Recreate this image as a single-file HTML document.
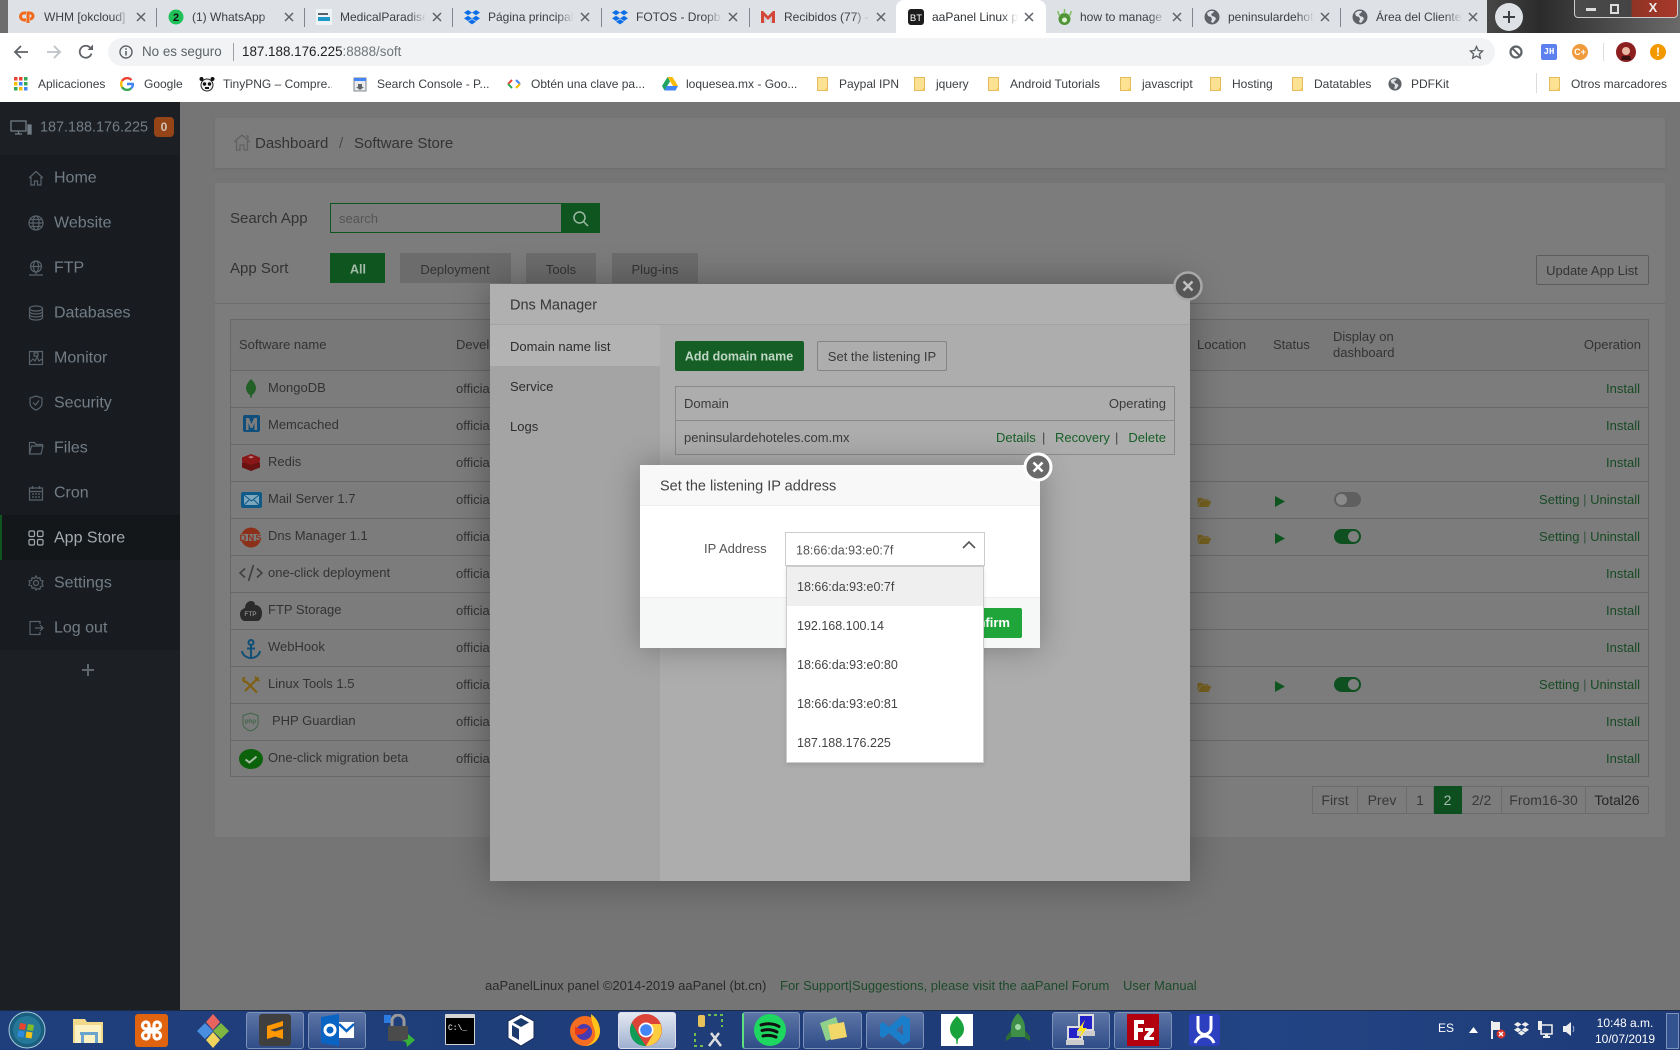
<!DOCTYPE html>
<html lang="en"><head><meta charset="utf-8"><title>aaPanel Linux panel</title>
<style>
html,body{margin:0;padding:0}
body{width:1680px;height:1050px;position:relative;overflow:hidden;background:#757575;font-family:"Liberation Sans",sans-serif;font-size:13px;color:#333}
div,svg,span.a{box-sizing:border-box}
.b,.t,svg.i{position:absolute}
.t{white-space:nowrap;transform:translateY(-50%);line-height:1.2}
.r{transform:translate(-100%,-50%)}
.c{transform:translate(-50%,-50%)}
.tab{font-size:12px;color:#3c4043;width:86px;overflow:hidden;-webkit-mask-image:linear-gradient(90deg,#000 80%,transparent)}
.sep{position:absolute;top:8px;width:1px;height:19px;background:#80868b}
.x{position:absolute;top:12px;width:10px;height:10px}
.bm{font-size:12px;color:#3c4043;top:84px}
.m{font-size:16px;color:#727d86}
.mi{position:absolute;left:28px;width:16px;height:16px;fill:none;stroke:#58626b;stroke-width:1.2}
.n{font-size:13px;color:#333;left:268px}
.o{font-size:13px;color:#333;left:456px}
.g{font-size:13px;color:#174a24}
.ln{position:absolute;left:230px;width:1419px;height:1px;background:#686868}
.tog{position:absolute;left:1334px;width:27px;height:15px;border-radius:8px;background:#0e5020}
.tog:after{content:"";position:absolute;right:2px;top:2px;width:11px;height:11px;border-radius:50%;background:#7f7f7f}
.off{background:#5f5f5f}.off:after{left:2px;right:auto;background:#8a8a8a}
.pg{position:absolute;top:786px;height:28px;border:1px solid #6c6c6c;border-left:0;font-size:14px;line-height:26px;text-align:center;color:#383838}
.dd{position:absolute;left:0;width:196px;height:39px;padding-left:10px;line-height:41px;font-size:12.5px;color:#444}
.box{position:absolute;top:1012px;height:37px;border:1px solid #7c90b8;border-radius:3px;background:linear-gradient(#5d75a6,#2f4d88)}
</style></head><body>
<svg width="0" height="0" style="position:absolute">
<symbol id="drop" viewBox="0 0 16 16"><path fill="#0d6fe8" d="M4 1 8 3.600 4 6.200 0 3.600zM12 1l4 2.600-4 2.600-4-2.600zM4 6.800 8 9.400 4 12 0 9.400zM12 6.800l4 2.600-4 2.600-4-2.600zM4 12.800 8 10.200l4 2.600-4 2.600z"/></symbol>
<symbol id="glb" viewBox="0 0 16 16"><circle cx="8" cy="8" r="7.500" fill="#5f6368"/><path fill="#dee1e6" d="M6 2 3 4l1 3 3 1 1 2-1 3 2 1 3-4-1-2-3-1-1-2 2-1 1-2z"/></symbol>
<symbol id="fld" viewBox="0 0 11 14"><path fill="#fde293" stroke="#e3bb5c" d="M.5.5h10v13H.5z"/><path fill="#f4c960" d="M7 13.500 10.500 10v3.500z"/></symbol>
<symbol id="cl" viewBox="0 0 10 10"><path stroke="#5f6368" stroke-width="1.500" d="M1 1l8 8M9 1l-8 8"/></symbol>
<symbol id="of" viewBox="0 0 15 12"><path fill="#75601f" d="M0 2h5l1 1.500h6V5H3L0 11.500zM3.500 5.500H15L12 12H.8z"/></symbol>
</svg>

<!-- window frame / tab strip -->
<div class="b" style="left:0;top:0;width:1680px;height:33px;background:linear-gradient(90deg,#6d6d6d 0,#6d6d6d 8px,#dee1e6 8px,#dee1e6 1487px,#474747 1487px,#2b2b2b 1540px,#6a6a6a 1680px)"></div>
<div class="b" style="left:896px;top:0;width:150px;height:33px;background:#fff;border-radius:8px 8px 0 0"></div>
<div class="sep" style="left:156px"></div><div class="sep" style="left:304px"></div><div class="sep" style="left:452px"></div><div class="sep" style="left:601px"></div><div class="sep" style="left:749px"></div><div class="sep" style="left:1192px"></div><div class="sep" style="left:1340px"></div>
<svg class="i" style="left:19px;top:9px" width="16" height="16" viewBox="0 0 16 16"><path fill="none" stroke="#f26a1b" stroke-width="3" d="M7 4H5a3.500 3.500 0 0 0 0 7h2M9 14V4h2a3 3 0 0 1 0 6"/></svg>
<div class="t tab" style="left:44px;top:17px">WHM [okcloud]</div><svg class="x" style="left:136px"><use href="#cl"/></svg>
<svg class="i" style="left:168px;top:9px" width="16" height="16" viewBox="0 0 16 16"><circle cx="8" cy="8" r="7.500" fill="#21c15a"/><text x="8" y="12" font-size="11" font-weight="bold" fill="#111" text-anchor="middle" font-family="Liberation Sans">2</text></svg>
<div class="t tab" style="left:192px;top:17px">(1) WhatsApp</div><svg class="x" style="left:284px"><use href="#cl"/></svg>
<svg class="i" style="left:316px;top:9px" width="16" height="16" viewBox="0 0 16 16"><rect width="16" height="16" fill="#eef3f5"/><path fill="#1d98c8" d="M2 8h12v4H2z"/><path fill="#56606a" d="M2 4h10v2H2z"/></svg>
<div class="t tab" style="left:340px;top:17px">MedicalParadise</div><svg class="x" style="left:432px"><use href="#cl"/></svg>
<svg class="i" style="left:464px;top:9px" width="16" height="16"><use href="#drop"/></svg>
<div class="t tab" style="left:488px;top:17px">Página principal</div><svg class="x" style="left:580px"><use href="#cl"/></svg>
<svg class="i" style="left:612px;top:9px" width="16" height="16"><use href="#drop"/></svg>
<div class="t tab" style="left:636px;top:17px">FOTOS - Dropbox</div><svg class="x" style="left:728px"><use href="#cl"/></svg>
<svg class="i" style="left:760px;top:9px" width="16" height="16" viewBox="0 0 16 16"><path fill="#d44638" d="M1 2h2l5 5 5-5h2v12h-3V7L8 11 4 7v7H1z"/><path fill="#c9ccd0" d="M4 7v7h2V9zM12 7v7h-2V9z"/></svg>
<div class="t tab" style="left:784px;top:17px">Recibidos (77) -</div><svg class="x" style="left:876px"><use href="#cl"/></svg>
<svg class="i" style="left:908px;top:9px" width="16" height="16" viewBox="0 0 16 16"><rect width="16" height="16" rx="3" fill="#1c1c1c"/><text x="8" y="12" font-size="9.500" fill="#fff" text-anchor="middle" font-family="Liberation Sans">BT</text></svg>
<div class="t tab" style="left:932px;top:17px;color:#2f3336">aaPanel Linux panel</div><svg class="x" style="left:1024px"><use href="#cl"/></svg>
<svg class="i" style="left:1056px;top:8px" width="17" height="18" viewBox="0 0 17 18"><circle cx="8.500" cy="11" r="6" fill="#4f9436"/><path fill="none" stroke="#7fbf63" stroke-width="1.500" d="M2 3c0 3 1 4 2 5M8.500 1v5M15 3c0 3-1 4-2 5"/><circle cx="8.500" cy="12" r="2.500" fill="#dff0d3"/></svg>
<div class="t tab" style="left:1080px;top:17px">how to manage</div><svg class="x" style="left:1172px"><use href="#cl"/></svg>
<svg class="i" style="left:1204px;top:9px" width="16" height="16"><use href="#glb"/></svg>
<div class="t tab" style="left:1228px;top:17px">peninsulardehoteles</div><svg class="x" style="left:1320px"><use href="#cl"/></svg>
<svg class="i" style="left:1352px;top:9px" width="16" height="16"><use href="#glb"/></svg>
<div class="t tab" style="left:1376px;top:17px">Área del Cliente</div><svg class="x" style="left:1468px"><use href="#cl"/></svg>
<svg class="i" style="left:1495px;top:3px" width="28" height="28" viewBox="0 0 28 28"><circle cx="14" cy="14" r="14" fill="#dee1e6"/><path stroke="#3c4043" stroke-width="2" d="M14 8v12M8 14h12"/></svg>
<!-- window buttons -->
<div class="b" style="left:1574px;top:0;width:104px;height:18px;border:1px solid #ccc;border-top:0;border-radius:0 0 4px 4px;background:linear-gradient(90deg,#4a4a4a 0,#444 55%,#8f3326 56%,#a8392a 100%)"></div>
<div class="b" style="left:1586px;top:8px;width:10px;height:3px;background:#ddd"></div>
<div class="b" style="left:1610px;top:4px;width:9px;height:10px;border:2px solid #ddd"></div>
<div class="t c" style="left:1653px;top:8px;font-size:13px;font-weight:bold;color:#eee">X</div>

<!-- toolbar -->
<div class="b" style="left:0;top:33px;width:1680px;height:69px;background:#fff"></div>
<div class="b" style="left:108px;top:38px;width:1387px;height:28px;border-radius:14px;background:#f1f3f4"></div>
<svg class="i" style="left:13px;top:44px" width="16" height="16" viewBox="0 0 16 16"><path fill="none" stroke="#5f6368" stroke-width="1.800" d="M15 8H2M8 2 2 8l6 6"/></svg>
<svg class="i" style="left:46px;top:44px" width="16" height="16" viewBox="0 0 16 16"><path fill="none" stroke="#bdc1c6" stroke-width="1.800" d="M1 8h13M8 2l6 6-6 6"/></svg>
<svg class="i" style="left:78px;top:44px" width="16" height="16" viewBox="0 0 16 16"><path fill="none" stroke="#5f6368" stroke-width="1.800" d="M13.500 9.500A6 6 0 1 1 12 3.500"/><path fill="#5f6368" d="M9.500 6H15V.5z"/></svg>
<svg class="i" style="left:119px;top:45px" width="14" height="14" viewBox="0 0 14 14"><circle cx="7" cy="7" r="6" fill="none" stroke="#5f6368" stroke-width="1.400"/><path stroke="#5f6368" stroke-width="1.600" d="M7 6v4.500M7 3.200v1.600"/></svg>
<div class="t" style="left:142px;top:52px;font-size:13.400px;color:#5f6368">No es seguro</div>
<div class="b" style="left:233px;top:43px;width:1px;height:18px;background:#9aa0a6"></div>
<div class="t" style="left:242px;top:52px;font-size:13.400px;color:#202124">187.188.176.225<span style="color:#70757a">:8888/soft</span></div>
<svg class="i" style="left:1469px;top:45px" width="15" height="15" viewBox="0 0 24 24"><path fill="none" stroke="#5f6368" stroke-width="2.200" d="M12 2.500l2.900 6.300 6.900.8-5.100 4.700 1.400 6.800-6.100-3.400-6.100 3.400 1.400-6.800L2.200 9.600l6.900-.8z"/></svg>
<svg class="i" style="left:1509px;top:45px" width="14" height="14" viewBox="0 0 14 14"><circle cx="7" cy="7" r="5.500" fill="none" stroke="#5f6368" stroke-width="2.200"/><path stroke="#5f6368" stroke-width="2" d="M3 3l8 8"/></svg>
<div class="b" style="left:1541px;top:44px;width:16px;height:16px;border-radius:2px;background:#5c80ee;color:#fff;font:bold 9px/16px 'Liberation Mono',monospace;text-align:center">JH</div>
<div class="b" style="left:1572px;top:44px;width:16px;height:16px;border-radius:50%;background:#ef9b3d;color:#fff;font:bold 9px/16px 'Liberation Sans',sans-serif;text-align:center">C+</div>
<div class="b" style="left:1603px;top:43px;width:1px;height:18px;background:#dadce0"></div>
<svg class="i" style="left:1616px;top:42px" width="20" height="20" viewBox="0 0 20 20"><circle cx="10" cy="10" r="10" fill="#8c1f1f"/><circle cx="10" cy="9" r="4" fill="#e8b9a5"/><path fill="#3a1010" d="M6 14h8l1 4H5z"/></svg>
<div class="b" style="left:1650px;top:44px;width:16px;height:16px;border-radius:50%;background:#f29900;color:#fff;font:bold 12px/16px 'Liberation Sans',sans-serif;text-align:center">!</div>

<!-- bookmarks -->
<svg class="i" style="left:14px;top:77px" width="14" height="14" viewBox="0 0 14 14"><path fill="#ea4335" d="M0 0h3.500v3.500H0zM5 0h3.500v3.500H5z"/><path fill="#34a853" d="M10 0h3.500v3.500H10zM10 5h3.500v3.500H10zM0 10h3.500v3.500H0z"/><path fill="#fbbc05" d="M0 5h3.500v3.500H0zM5 10h3.500v3.500H5z"/><path fill="#4285f4" d="M5 5h3.500v3.500H5zM10 10h3.500v3.500H10z"/></svg>
<div class="t bm" style="left:38px">Aplicaciones</div>
<svg class="i" style="left:120px;top:77px" width="14" height="14" viewBox="0 0 14 14"><path fill="none" stroke="#ea4335" stroke-width="2.400" d="M11.500 3A6 6 0 0 0 2 4"/><path fill="none" stroke="#fbbc05" stroke-width="2.400" d="M2 4a6 6 0 0 0 0 6"/><path fill="none" stroke="#34a853" stroke-width="2.400" d="M2 10a6 6 0 0 0 9 1.500"/><path fill="none" stroke="#4285f4" stroke-width="2.400" d="M11 11.500A6 6 0 0 0 13 7H7"/></svg>
<div class="t bm" style="left:144px">Google</div>
<svg class="i" style="left:199px;top:76px" width="16" height="16" viewBox="0 0 16 16"><circle cx="8" cy="9" r="6" fill="#f0f0f0" stroke="#222"/><circle cx="2.500" cy="3" r="2" fill="#111"/><circle cx="13.500" cy="3" r="2" fill="#111"/><circle cx="5.500" cy="8" r="1.700" fill="#111"/><circle cx="10.500" cy="8" r="1.700" fill="#111"/><path fill="#111" d="M6 11h4v2H6z"/></svg>
<div class="t bm" style="left:223px;width:109px;overflow:hidden">TinyPNG – Compre...</div>
<svg class="i" style="left:353px;top:76px" width="14" height="16" viewBox="0 0 14 16"><rect x="1" y="2" width="12" height="13" fill="#e8eaed" stroke="#80868b"/><path fill="#4285f4" d="M1 2h12v3H1z"/><path fill="#5f6368" d="M5 8h4v3h2l-4 3-4-3h2z"/></svg>
<div class="t bm" style="left:377px">Search Console - P...</div>
<svg class="i" style="left:507px;top:78px" width="14" height="12" viewBox="0 0 14 12"><path fill="none" stroke="#ea4335" stroke-width="2" d="M5 2 1 6"/><path fill="none" stroke="#34a853" stroke-width="2" d="M1 6l4 4"/><path fill="none" stroke="#4285f4" stroke-width="2" d="M9 2l4 4"/><path fill="none" stroke="#fbbc05" stroke-width="2" d="M13 6l-4 4"/></svg>
<div class="t bm" style="left:531px">Obtén una clave pa...</div>
<svg class="i" style="left:662px;top:77px" width="16" height="14" viewBox="0 0 16 14"><path fill="#fbbc05" d="M5.500 0h5l5.500 9h-5z"/><path fill="#1fa463" d="M5.500 0 0 9l2.500 4.500L8 4.500z"/><path fill="#4285f4" d="M4.500 9H16l-2.500 4.500h-11z"/></svg>
<div class="t bm" style="left:686px">loquesea.mx - Goo...</div>
<svg class="i" style="left:817px;top:77px" width="11" height="14"><use href="#fld"/></svg><div class="t bm" style="left:839px">Paypal IPN</div>
<svg class="i" style="left:914px;top:77px" width="11" height="14"><use href="#fld"/></svg><div class="t bm" style="left:936px">jquery</div>
<svg class="i" style="left:988px;top:77px" width="11" height="14"><use href="#fld"/></svg><div class="t bm" style="left:1010px">Android Tutorials</div>
<svg class="i" style="left:1120px;top:77px" width="11" height="14"><use href="#fld"/></svg><div class="t bm" style="left:1142px">javascript</div>
<svg class="i" style="left:1210px;top:77px" width="11" height="14"><use href="#fld"/></svg><div class="t bm" style="left:1232px">Hosting</div>
<svg class="i" style="left:1292px;top:77px" width="11" height="14"><use href="#fld"/></svg><div class="t bm" style="left:1314px">Datatables</div>
<svg class="i" style="left:1388px;top:77px" width="14" height="14"><use href="#glb"/></svg><div class="t bm" style="left:1411px">PDFKit</div>
<div class="b" style="left:1536px;top:73px;width:1px;height:20px;background:#dadce0"></div>
<svg class="i" style="left:1549px;top:77px" width="11" height="14"><use href="#fld"/></svg><div class="t bm" style="left:1571px">Otros marcadores</div>

<!-- page background -->
<div class="b" style="left:0;top:102px;width:1680px;height:909px;background:#757575"></div>

<!-- sidebar -->
<div class="b" style="left:0;top:102px;width:180px;height:909px;background:#1c2024"></div>
<div class="b" style="left:0;top:155px;width:180px;height:495px;background:#181c21"></div>
<div class="b" style="left:0;top:515px;width:180px;height:45px;background:#14171a"></div>
<div class="b" style="left:0;top:515px;width:2px;height:45px;background:#0f5520"></div>
<svg class="i" style="left:10px;top:120px" width="22" height="16" viewBox="0 0 22 16" fill="none" stroke="#727d86" stroke-width="1.300"><path d="M1 1h15v10H1zM5 14h7M8.500 11v3"/><path fill="#727d86" d="M18 5h3v9h-3z"/></svg>
<div class="t" style="left:40px;top:128px;font-size:14.400px;color:#727d86">187.188.176.225</div>
<div class="b" style="left:154px;top:117px;width:20px;height:20px;border-radius:4px;background:#944416;color:#d0c5b8;font:bold 12px/20px 'Liberation Sans',sans-serif;text-align:center">0</div>

<svg class="mi" style="top:170px" viewBox="0 0 16 16"><path d="M1 8l7-6.500L15 8M3 7v8h3.500v-4h3v4H13V7"/></svg><div class="t m" style="left:54px;top:178px">Home</div>
<svg class="mi" style="top:215px" viewBox="0 0 16 16"><circle cx="8" cy="8" r="7"/><ellipse cx="8" cy="8" rx="3" ry="7"/><path d="M1 8h14M2 4.500h12M2 11.500h12"/></svg><div class="t m" style="left:54px;top:223px">Website</div>
<svg class="mi" style="top:260px" viewBox="0 0 16 16"><circle cx="8" cy="6.500" r="5.500"/><ellipse cx="8" cy="6.500" rx="2.500" ry="5.500"/><path d="M2.500 6.500h11M8 12v2M1 15h14"/></svg><div class="t m" style="left:54px;top:268px">FTP</div>
<svg class="mi" style="top:305px" viewBox="0 0 16 16"><ellipse cx="8" cy="3.500" rx="6.500" ry="2.500"/><path d="M1.500 3.500v9c0 1.400 3 2.500 6.500 2.500s6.500-1.100 6.500-2.500v-9M1.500 6.500C1.500 8 4.500 9 8 9s6.500-1 6.500-2.500M1.500 9.500C1.500 11 4.500 12 8 12s6.500-1 6.500-2.500"/></svg><div class="t m" style="left:54px;top:313px">Databases</div>
<svg class="mi" style="top:350px" viewBox="0 0 16 16"><path d="M1.500 1.500h13v13h-13zM2 12l3-3 2 2 2-4 2 4 3-2M6 3h4v3H6z"/></svg><div class="t m" style="left:54px;top:358px">Monitor</div>
<svg class="mi" style="top:395px" viewBox="0 0 16 16"><path d="M8 1l6 2v5c0 3.500-3 6-6 7-3-1-6-3.500-6-7V3zM5 7.500 7.500 10 11 5.500"/></svg><div class="t m" style="left:54px;top:403px">Security</div>
<svg class="mi" style="top:440px" viewBox="0 0 16 16"><path d="M1.500 14V2.500h5L8 4.500h6.500V6M1.500 14H13l2-8H3.500z"/></svg><div class="t m" style="left:54px;top:448px">Files</div>
<svg class="mi" style="top:485px" viewBox="0 0 16 16"><path d="M1.500 3h13v12h-13zM1.500 6.500h13M4.500 1v3M11.500 1v3M4 9h2M7 9h2M10 9h2M4 12h2M7 12h2M10 12h2"/></svg><div class="t m" style="left:54px;top:493px">Cron</div>
<svg class="mi" style="top:530px;stroke:#a4abb0" viewBox="0 0 16 16"><rect x="1" y="1" width="5.500" height="5.500" rx="1.200"/><rect x="9.500" y="1" width="5.500" height="5.500" rx="1.200"/><rect x="1" y="9.500" width="5.500" height="5.500" rx="1.200"/><rect x="9.500" y="9.500" width="5.500" height="5.500" rx="1.200"/></svg><div class="t m" style="left:54px;top:538px;color:#a4abb0">App Store</div>
<svg class="mi" style="top:575px" viewBox="0 0 16 16"><circle cx="8" cy="8" r="2.500"/><path d="M8 1l1.300 2.300 2.600-.6.500 2.600 2.600.7-1 2.500 1 2.500-2.600.7-.5 2.600-2.600-.6L8 15l-1.300-2.300-2.600.6-.5-2.600L1 10l1-2-1-2 2.600-.7.500-2.600 2.600.6z"/></svg><div class="t m" style="left:54px;top:583px">Settings</div>
<svg class="mi" style="top:620px" viewBox="0 0 16 16"><path d="M12 4V1.500H2v13h10V12M7 8h8M12 5l3 3-3 3"/></svg><div class="t m" style="left:54px;top:628px">Log out</div>
<svg class="i" style="left:81px;top:663px" width="14" height="14" viewBox="0 0 14 14"><path stroke="#5e666d" stroke-width="2" d="M7 1v12M1 7h12"/></svg>

<!-- breadcrumb -->
<div class="b" style="left:215px;top:118px;width:1450px;height:50px;background:#7c7c7c;box-shadow:0 1px 2px #6c6c6c"></div>
<svg class="i" style="left:233px;top:133px" width="18" height="18" viewBox="0 0 18 18" fill="none" stroke="#606060" stroke-width="1.200"><path d="M1 9 9 2l8 7M3.500 8v9H7v-5h4v5h3.500V8M13 3h2v3"/></svg>
<div class="t" style="left:255px;top:144px;font-size:15px">Dashboard</div>
<div class="t" style="left:339px;top:144px;font-size:15px;color:#4a4a4a">/</div>
<div class="t" style="left:354px;top:144px;font-size:15px">Software Store</div>

<!-- main panel -->
<div class="b" style="left:215px;top:183px;width:1450px;height:654px;background:#7c7c7c"></div>
<div class="t" style="left:230px;top:219px;font-size:15px">Search App</div>
<div class="b" style="left:330px;top:203px;width:232px;height:30px;border:1px solid #0f5520;border-right:0"></div>
<div class="t" style="left:339px;top:219px;font-size:13px;color:#555">search</div>
<div class="b" style="left:561px;top:203px;width:39px;height:30px;background:#0f5520"></div>
<svg class="i" style="left:572px;top:210px" width="17" height="17" viewBox="0 0 17 17" fill="none" stroke="#9db8a4" stroke-width="1.500"><circle cx="7.500" cy="7.500" r="5.500"/><path d="M11.500 11.500 16 16"/></svg>
<div class="t" style="left:230px;top:269px;font-size:15px">App Sort</div>
<div class="b" style="left:330px;top:253px;width:55px;height:30px;background:#0f5520"></div>
<div class="t c" style="left:358px;top:270px;color:#a6bcab;font-weight:bold;font-size:12.500px">All</div>
<div class="b" style="left:400px;top:253px;width:111px;height:30px;background:#6c6c6c"></div>
<div class="t c" style="left:455px;top:270px">Deployment</div>
<div class="b" style="left:526px;top:253px;width:70px;height:30px;background:#6c6c6c"></div>
<div class="t c" style="left:561px;top:270px">Tools</div>
<div class="b" style="left:612px;top:253px;width:86px;height:30px;background:#6c6c6c"></div>
<div class="t c" style="left:655px;top:270px">Plug-ins</div>
<div class="b" style="left:1536px;top:255px;width:113px;height:30px;border:1px solid #5c5c5c;border-radius:2px"></div>
<div class="t c" style="left:1592px;top:271px">Update App List</div>
<div class="b" style="left:215px;top:303px;width:1450px;height:1px;background:#6c6c6c"></div>

<!-- table -->
<div class="b" style="left:230px;top:319px;width:1419px;height:458px;border:1px solid #686868"></div>
<div class="b" style="left:231px;top:320px;width:1417px;height:50px;background:#787878"></div>
<div class="ln" style="top:370px"></div><div class="ln" style="top:407px"></div><div class="ln" style="top:444px"></div><div class="ln" style="top:481px"></div><div class="ln" style="top:518px"></div><div class="ln" style="top:555px"></div><div class="ln" style="top:592px"></div><div class="ln" style="top:629px"></div><div class="ln" style="top:666px"></div><div class="ln" style="top:703px"></div><div class="ln" style="top:740px"></div>
<div class="t" style="left:239px;top:345px">Software name</div>
<div class="t" style="left:456px;top:345px">Developer</div>
<div class="t" style="left:1197px;top:345px">Location</div>
<div class="t" style="left:1273px;top:345px">Status</div>
<div class="t" style="left:1333px;top:337px">Display on</div>
<div class="t" style="left:1333px;top:353px">dashboard</div>
<div class="t r" style="left:1641px;top:345px">Operation</div>

<svg class="i" style="left:246px;top:379px" width="10" height="19" viewBox="0 0 10 19"><path fill="#236028" d="M5 0c3 3 5 6 5 9s-2 6-4 7l-.5 3h-1L4 16C2 15 0 12 0 9s2-6 5-9z"/></svg>
<div class="t n" style="top:388px">MongoDB</div>
<svg class="i" style="left:243px;top:415px" width="17" height="17" viewBox="0 0 17 17"><rect width="17" height="17" rx="2" fill="#104f7c"/><path fill="#7c7c7c" d="M3 3h3l2.500 6L11 3h3v12h-2.500V8l-2 5h-2l-2-5v7H3z"/></svg>
<div class="t n" style="top:425px">Memcached</div>
<svg class="i" style="left:242px;top:454px" width="18" height="17" viewBox="0 0 18 17"><path fill="#6a1212" d="M9 5l9 3.500v5L9 17l-9-3.500v-5z"/><path fill="#8a1818" d="M9 0l9 3.500v4L9 11 0 7.500v-4z"/><path fill="#b98080" d="M9 2l3 1-3 1.500L6 3z"/></svg>
<div class="t n" style="top:462px">Redis</div>
<svg class="i" style="left:241px;top:492px" width="21" height="16" viewBox="0 0 21 16"><rect width="21" height="16" rx="2" fill="#0e5a88"/><path fill="#7ea6bd" d="M3 3h15v10H3z"/><path fill="none" stroke="#0e5a88" d="M3 3l7.500 6L18 3M3 13l5.500-5.500M18 13l-5.500-5.500"/></svg>
<div class="t n" style="top:499px">Mail Server 1.7</div>
<svg class="i" style="left:239px;top:527px" width="24" height="21" viewBox="0 0 24 21"><circle cx="12" cy="10.500" r="10" fill="#8c3019"/><path fill="#7c7c7c" d="M0 7h24v7H0z"/><text x="12" y="14" font-size="9.500" font-weight="bold" fill="#8c3019" text-anchor="middle" font-family="Liberation Sans" letter-spacing="1">DNS</text></svg>
<div class="t n" style="top:536px">Dns Manager 1.1</div>
<svg class="i" style="left:239px;top:564px" width="24" height="18" viewBox="0 0 24 18" fill="none" stroke="#3e3e3e" stroke-width="1.600"><path d="M6 4.500 1 9l5 4.500M18 4.500 23 9l-5 4.500M14.500 1 9.500 17"/></svg>
<div class="t n" style="top:573px">one-click deployment</div>
<svg class="i" style="left:240px;top:601px" width="22" height="21" viewBox="0 0 22 21"><path fill="#2b2b2b" d="M11 0c3 0 4 2 4 4 4 0 7 3 7 8 0 5-2 8-5 8H5c-3 0-5-3-5-7 0-3 2-5 5-6 0-4 3-7 6-7z"/><text x="10.500" y="15" font-size="6.500" fill="#aaa" text-anchor="middle" font-family="Liberation Sans">FTP</text></svg>
<div class="t n" style="top:610px">FTP Storage</div>
<svg class="i" style="left:241px;top:639px" width="20" height="20" viewBox="0 0 20 20" fill="none" stroke="#104f76" stroke-width="2"><circle cx="10" cy="3.500" r="2.500"/><path d="M10 6v13M6 9.500h8M1 12c.5 4 4.500 7 9 7s8.500-3 9-7"/></svg>
<div class="t n" style="top:647px">WebHook</div>
<svg class="i" style="left:242px;top:676px" width="18" height="18" viewBox="0 0 18 18" fill="none" stroke="#7f5f12" stroke-width="2.200"><path d="M3 1.500c-1 .5-2 1.500-1.500 3s2 1.500 3 1.500L15 16.500M16.500 1.500 3 15M13 1l4 4"/></svg>
<div class="t n" style="top:684px">Linux Tools 1.5</div>
<svg class="i" style="left:242px;top:712px" width="17" height="20" viewBox="0 0 17 20"><path fill="none" stroke="#3f6549" d="M8.500 1 16 3.500V12c0 3-4 6-7.500 7C5 18 1 15 1 12V3.500z"/><text x="8.500" y="11" font-size="6" font-weight="bold" fill="#3f6549" text-anchor="middle" font-family="Liberation Sans">php</text></svg>
<div class="t n" style="top:721px;left:272px">PHP Guardian</div>
<svg class="i" style="left:239px;top:749px" width="24" height="20" viewBox="0 0 24 20"><ellipse cx="12" cy="10" rx="12" ry="10" fill="#0b620b"/><path fill="none" stroke="#a6bca6" stroke-width="2" d="M6.500 10.500l4 3 7-6"/></svg>
<div class="t n" style="top:758px">One-click migration beta</div>

<div class="t o" style="top:389px">official</div><div class="t o" style="top:426px">official</div><div class="t o" style="top:463px">official</div><div class="t o" style="top:500px">official</div><div class="t o" style="top:537px">official</div><div class="t o" style="top:574px">official</div><div class="t o" style="top:611px">official</div><div class="t o" style="top:648px">official</div><div class="t o" style="top:685px">official</div><div class="t o" style="top:722px">official</div><div class="t o" style="top:759px">official</div>

<div class="t g r" style="left:1640px;top:389px">Install</div><div class="t g r" style="left:1640px;top:426px">Install</div><div class="t g r" style="left:1640px;top:463px">Install</div>
<div class="t g r" style="left:1640px;top:500px">Setting <span style="color:#35523e">|</span> Uninstall</div>
<div class="t g r" style="left:1640px;top:537px">Setting <span style="color:#35523e">|</span> Uninstall</div>
<div class="t g r" style="left:1640px;top:574px">Install</div><div class="t g r" style="left:1640px;top:611px">Install</div><div class="t g r" style="left:1640px;top:648px">Install</div>
<div class="t g r" style="left:1640px;top:685px">Setting <span style="color:#35523e">|</span> Uninstall</div>
<div class="t g r" style="left:1640px;top:722px">Install</div><div class="t g r" style="left:1640px;top:759px">Install</div>

<svg class="i" style="left:1197px;top:496px" width="15" height="11"><use href="#of"/></svg>
<svg class="i" style="left:1197px;top:533px" width="15" height="11"><use href="#of"/></svg>
<svg class="i" style="left:1197px;top:681px" width="15" height="11"><use href="#of"/></svg>
<svg class="i" style="left:1275px;top:496px" width="10" height="11"><path fill="#0e5520" d="M0 0l10 5.500L0 11z"/></svg>
<svg class="i" style="left:1275px;top:533px" width="10" height="11"><path fill="#0e5520" d="M0 0l10 5.500L0 11z"/></svg>
<svg class="i" style="left:1275px;top:681px" width="10" height="11"><path fill="#0e5520" d="M0 0l10 5.500L0 11z"/></svg>
<div class="tog off" style="top:492px"></div><div class="tog" style="top:529px"></div><div class="tog" style="top:677px"></div>

<!-- pagination -->
<div class="pg" style="left:1312px;width:46px;border-left:1px solid #6c6c6c">First</div>
<div class="pg" style="left:1358px;width:49px">Prev</div>
<div class="pg" style="left:1407px;width:27px">1</div>
<div class="pg" style="left:1434px;width:28px;background:#0e4f20;color:#a9bdae;border-color:#0e4f20">2</div>
<div class="pg" style="left:1462px;width:40px">2/2</div>
<div class="pg" style="left:1502px;width:84px">From16-30</div>
<div class="pg" style="left:1586px;width:63px;color:#252525">Total26</div>

<!-- footer -->
<div class="t" style="left:485px;top:986px;color:#2a2a2a">aaPanelLinux panel ©2014-2019 aaPanel (bt.cn)</div>
<div class="t" style="left:780px;top:986px;color:#1d4a2a">For Support|Suggestions, please visit the aaPanel Forum</div>
<div class="t" style="left:1123px;top:986px;color:#1d4a2a">User Manual</div>

<!-- dns modal -->
<div class="b" style="left:490px;top:284px;width:700px;height:597px;background:#adadad;box-shadow:0 0 35px rgba(0,0,0,.32)"></div>
<div class="b" style="left:490px;top:284px;width:700px;height:41px;background:#b0b0b0;border-bottom:1px solid #a3a3a3"></div>
<div class="t" style="left:510px;top:306px;font-size:14.500px;color:#363636">Dns Manager</div>
<div class="b" style="left:490px;top:325px;width:170px;height:556px;background:#a4a4a4"></div>
<div class="b" style="left:490px;top:325px;width:170px;height:41px;background:#b3b3b3"></div>
<div class="t" style="left:510px;top:347px;color:#2d2d2d">Domain name list</div>
<div class="t" style="left:510px;top:387px;color:#2d2d2d">Service</div>
<div class="t" style="left:510px;top:427px;color:#2d2d2d">Logs</div>
<div class="b" style="left:675px;top:341px;width:129px;height:30px;background:#155f26;border-radius:2px"></div>
<div class="t c" style="left:739px;top:357px;color:#bfd6c4;font-weight:bold;font-size:12.500px">Add domain name</div>
<div class="b" style="left:817px;top:341px;width:130px;height:30px;border:1px solid #848484;border-radius:2px"></div>
<div class="t c" style="left:882px;top:357px;color:#3a3a3a">Set the listening IP</div>
<div class="b" style="left:675px;top:386px;width:500px;height:69px;border:1px solid #8a8a8a"></div>
<div class="b" style="left:676px;top:420px;width:498px;height:1px;background:#8a8a8a"></div>
<div class="t" style="left:684px;top:404px;color:#3a3a3a">Domain</div>
<div class="t r" style="left:1166px;top:404px;color:#3a3a3a">Operating</div>
<div class="t" style="left:684px;top:438px;color:#3a3a3a">peninsulardehoteles.com.mx</div>
<div class="t" style="left:996px;top:438px;color:#175f28">Details</div><div class="t" style="left:1042px;top:438px;color:#444">|</div>
<div class="t" style="left:1055px;top:438px;color:#175f28">Recovery</div><div class="t" style="left:1115px;top:438px;color:#444">|</div>
<div class="t r" style="left:1166px;top:438px;color:#175f28">Delete</div>
<svg class="i" style="left:1173px;top:271px" width="30" height="30" viewBox="0 0 30 30"><circle cx="15" cy="15" r="13.500" fill="#575757" stroke="#a8a8a8" stroke-width="2.500"/><path stroke="#c2c2c2" stroke-width="2.400" d="M10.500 10.500l9 9M19.500 10.500l-9 9"/></svg>

<!-- top modal -->
<div class="b" style="left:640px;top:465px;width:400px;height:183px;background:#fff;box-shadow:0 0 30px rgba(0,0,0,.3)"></div>
<div class="b" style="left:640px;top:465px;width:400px;height:41px;background:#f8f8f8;border-bottom:1px solid #eee"></div>
<div class="t" style="left:660px;top:487px;font-size:14.500px;color:#444">Set the listening IP address</div>
<div class="b" style="left:640px;top:597px;width:400px;height:51px;background:#f6f8f8;border-top:1px solid #eee"></div>
<div class="t" style="left:704px;top:549px;color:#555">IP Address</div>
<div class="b" style="left:785px;top:532px;width:200px;height:34px;border:1px solid #ccc;background:#fff"></div>
<div class="t" style="left:796px;top:551px;font-size:12.500px;color:#555">18:66:da:93:e0:7f</div>
<svg class="i" style="left:962px;top:540px" width="14" height="10" viewBox="0 0 14 10"><path fill="none" stroke="#555" stroke-width="1.600" d="M1 8l6-6 6 6"/></svg>
<div class="b" style="left:950px;top:608px;width:72px;height:30px;background:#20a53a;border-radius:2px"></div>
<div class="t r" style="left:1010px;top:623px;font-weight:bold;color:#fff">Confirm</div>
<div class="b" style="left:786px;top:566px;width:198px;height:197px;border:1px solid #ccc;background:#fff;box-shadow:0 2px 4px rgba(0,0,0,.1)">
<div class="dd" style="top:0;background:#efefef">18:66:da:93:e0:7f</div>
<div class="dd" style="top:39px">192.168.100.14</div>
<div class="dd" style="top:78px">18:66:da:93:e0:80</div>
<div class="dd" style="top:117px">18:66:da:93:e0:81</div>
<div class="dd" style="top:156px">187.188.176.225</div>
</div>
<svg class="i" style="left:1023px;top:452px" width="30" height="30" viewBox="0 0 30 30"><circle cx="15" cy="15" r="13" fill="#6a6a6a" stroke="#fff" stroke-width="3"/><path stroke="#fff" stroke-width="2.600" d="M10.500 10.500l9 9M19.500 10.500l-9 9"/></svg>

<!-- taskbar -->
<div class="b" style="left:0;top:1010px;width:1680px;height:40px;background:linear-gradient(90deg,#1f3f7c,#1e3c78 60%,#234484 75%,#1d3a76);border-top:1px solid #1d2a44"></div>
<div class="box" style="left:246px;width:58px"></div><div class="box" style="left:308px;width:58px"></div>
<div class="box" style="left:618px;width:58px;background:linear-gradient(#e3e8f0,#9fb1d1);border-color:#dde"></div>
<div class="box" style="left:742px;width:58px;border-left:2px solid #5fe07e"></div><div class="box" style="left:803px;width:59px"></div>
<div class="box" style="left:866px;width:58px"></div><div class="box" style="left:1052px;width:58px"></div><div class="box" style="left:1114px;width:58px"></div>
<svg class="i" style="left:8px;top:1011px" width="38" height="38" viewBox="0 0 38 38"><circle cx="19" cy="19" r="18" fill="#1a5f80" stroke="#a7c8d8"/><circle cx="19" cy="19" r="14" fill="#267899"/><path fill="#e8452c" d="M12 12l6 1-1 6-6-1z"/><path fill="#7fbb2a" d="M20 13l6 1-1 6-6-1z"/><path fill="#2f8be0" d="M10.500 19.500l6 1-1 6-6-1z"/><path fill="#f5c21c" d="M18.500 20.500l6 1-1 6-6-1z"/></svg>
<svg class="i" style="left:72px;top:1015px" width="32" height="30" viewBox="0 0 32 30"><path fill="#f1d98a" d="M1 4h12l2 3h16v21H1z"/><path fill="#fdf2c3" d="M3 10h26v18H3z"/><path fill="#6aa4cc" d="M8 17h18v3H8zM9 20h3v8H9zM23 20h3v8h-3z"/></svg>
<svg class="i" style="left:135px;top:1014px" width="33" height="33" viewBox="0 0 33 33"><rect width="33" height="33" rx="3" fill="#e0640f"/><path fill="none" stroke="#fff" stroke-width="3.200" d="M11 8a3.500 3.500 0 1 0 0 7h11a3.500 3.500 0 1 0 0-7 3 3 0 0 0-3 3v11a3 3 0 0 0 3 3 3.500 3.500 0 1 0 0-7H11a3.500 3.500 0 1 0 0 7 3 3 0 0 0 3-3V11a3 3 0 0 0-3-3z"/></svg>
<svg class="i" style="left:196px;top:1013px" width="34" height="35" viewBox="0 0 34 35"><path fill="#e8655f" d="M17 1l7 8-7 8-7-8z"/><path fill="#7fb642" d="M25 10l8 8-8 8-8-8z"/><path fill="#4a8ee0" d="M9 10l8 8-8 8-8-8z"/><path fill="#f1d45c" d="M17 19l7 8-7 8-7-8z"/></svg>
<svg class="i" style="left:259px;top:1014px" width="32" height="32" viewBox="0 0 32 32"><rect width="32" height="32" rx="3" fill="#3f3f3f"/><path fill="#ff9800" d="M8 12l16-5v5L8 17zM8 15l16 5v5L8 20zM8 20l16-5v5L8 25z"/></svg>
<svg class="i" style="left:321px;top:1014px" width="34" height="32" viewBox="0 0 34 32"><path fill="#0a64c4" d="M0 3l18-3v32L0 29z"/><circle cx="9" cy="16" r="5" fill="none" stroke="#fff" stroke-width="3"/><rect x="18" y="8" width="15" height="16" fill="#fff"/><path fill="none" stroke="#0a64c4" stroke-width="2.500" d="M18 10l7.500 7L33 10"/></svg>
<svg class="i" style="left:382px;top:1014px" width="34" height="33" viewBox="0 0 34 33"><path fill="#2b7be0" d="M2 1h7v8H2z"/><rect x="6" y="12" width="20" height="15" fill="#4b4b4b"/><path fill="none" stroke="#999" stroke-width="3" d="M10 12V7a6 6 0 0 1 12 0v5"/><path fill="#38b13b" d="M26 20l7 6-8 7-1-5-4-1 6-2z"/></svg>
<svg class="i" style="left:445px;top:1014px" width="30" height="31" viewBox="0 0 30 31"><rect width="30" height="31" rx="1" fill="#d4d4d4"/><rect x="1" y="4" width="28" height="26" fill="#000"/><text x="3" y="16" font-size="8" fill="#fff" font-family="Liberation Mono">C:\_</text></svg>
<svg class="i" style="left:507px;top:1013px" width="28" height="34" viewBox="0 0 28 34"><path fill="#fff" stroke="#1a2a55" d="M14 1l13 7v17l-13 8-13-8V8z"/><path fill="#1c3a6c" d="M14 5l8 4.500-8 4.500-8-4.500zM5 12l7 4v11l-7-4z"/></svg>
<svg class="i" style="left:569px;top:1013px" width="32" height="34" viewBox="0 0 32 34"><circle cx="16" cy="18" r="15" fill="#f46d20"/><path fill="#ffc319" d="M22 1c7 5 9 12 9 17 0 8-7 15-15 15 7-2 11-7 10-14-1-6-4-10-4-18z"/><circle cx="15" cy="19" r="8" fill="#4a3ab0"/><path fill="#e8391c" d="M6 13c3 4 8 3 13 2-2 5-7 8-13 6z"/></svg>
<svg class="i" style="left:630px;top:1014px" width="32" height="32" viewBox="0 0 32 32"><circle cx="16" cy="16" r="16" fill="#db4437"/><path fill="#0f9d58" d="M2 9l7 13 7 10C6 32 0 25 0 16c0-2.500.7-5 2-7z"/><path fill="#ffcd40" d="M16 10h14.500A16 16 0 0 1 16 32l7-12z"/><circle cx="16" cy="16" r="7.500" fill="#fff"/><circle cx="16" cy="16" r="5.800" fill="#4285f4"/></svg>
<svg class="i" style="left:693px;top:1013px" width="32" height="35" viewBox="0 0 32 35"><rect x="5" y="2" width="7" height="12" rx="2" fill="#e8c25a"/><path fill="none" stroke="#6fbf4a" stroke-width="2" stroke-dasharray="3 3" d="M15 2h14v12M2 20v13h10"/><path stroke="#ddd" stroke-width="2.500" d="M16 33l10-13M28 33 18 20"/></svg>
<svg class="i" style="left:754px;top:1014px" width="32" height="32" viewBox="0 0 32 32"><circle cx="16" cy="16" r="16" fill="#1ed760"/><path fill="none" stroke="#111" stroke-width="3" stroke-linecap="round" d="M7 11c6-2 13-1.500 18 1.500M8 16.500c5-1.500 11-1 15 1.500M9 22c4-1 9-.8 13 1"/></svg>
<svg class="i" style="left:818px;top:1015px" width="30" height="28" viewBox="0 0 30 28"><path fill="#8fd18b" d="M2 8l16-6 6 18-16 6z"/><path fill="#f2d868" d="M10 10l16-3 3 15-16 3z"/></svg>
<svg class="i" style="left:879px;top:1014px" width="32" height="32" viewBox="0 0 32 32"><path fill="#1a7ecb" d="M24 1l7 4v22l-7 4-14-12-6 5-3-2v-12l3-2 6 5zM24 10l-7 6 7 5z"/></svg>
<div class="b" style="left:941px;top:1014px;width:32px;height:32px;background:#fff"></div>
<svg class="i" style="left:950px;top:1016px" width="14" height="28" viewBox="0 0 14 28"><path fill="#18a33c" d="M7 0c4 4 7 8 7 13s-3 8-6 10l-.5 5h-1L6 23c-3-2-6-5-6-10S3 4 7 0z"/></svg>
<svg class="i" style="left:1006px;top:1013px" width="24" height="33" viewBox="0 0 24 33"><path fill="#3f8f49" d="M12 0c5 5 7 10 7 15v9H5v-9C5 10 7 5 12 0z"/><circle cx="12" cy="14" r="3" fill="#9ed8a6"/><path fill="#2c6e35" d="M5 17 0 24v4l5-3zM19 17l5 7v4l-5-3z"/></svg>
<svg class="i" style="left:1065px;top:1014px" width="32" height="32" viewBox="0 0 32 32"><rect x="14" y="1" width="14" height="15" fill="#2222c8" stroke="#ddd" stroke-width="2"/><rect x="3" y="13" width="14" height="12" fill="#2222c8" stroke="#ddd" stroke-width="2"/><path fill="#ccc" d="M1 26h18v5H1zM12 17h18v5H12z"/><path fill="#ffe41c" d="M20 6l-8 11h5l-4 9 9-12h-5z"/></svg>
<svg class="i" style="left:1127px;top:1014px" width="32" height="32" viewBox="0 0 32 32"><rect width="32" height="32" fill="#b2000e"/><path fill="#fff" d="M7 6h10v4h-6v4h5v4h-5v8H7zM18 14h9v3l-5 6h5v3H17v-3l5-6h-4z"/></svg>
<svg class="i" style="left:1189px;top:1014px" width="31" height="32" viewBox="0 0 31 32"><rect width="31" height="32" rx="3" fill="#2b3fbf"/><path fill="none" stroke="#fff" stroke-width="3" d="M9 2v12a6.500 6.500 0 0 0 13 0V2M6 29c2-5 5-7 9.500-7S23 24 25 29"/></svg>
<div class="t c" style="left:1446px;top:1028px;font-size:12px;color:#fff">ES</div>
<svg class="i" style="left:1469px;top:1027px" width="9" height="6"><path fill="#fff" d="M0 6l4.500-6L9 6z"/></svg>
<svg class="i" style="left:1490px;top:1021px" width="16" height="18" viewBox="0 0 16 18"><path fill="#eee" d="M1 0h2v18H1zM3 1h7v8H3z"/><circle cx="11" cy="13" r="4.500" fill="#d8322a"/><path stroke="#fff" stroke-width="1.400" d="M9 11l4 4M13 11l-4 4"/></svg>
<svg class="i" style="left:1514px;top:1021px" width="15" height="15" viewBox="0 0 16 16"><path fill="#eee" d="M4 1 8 3.600 4 6.200 0 3.600zM12 1l4 2.600-4 2.600-4-2.600zM4 6.800 8 9.400 4 12 0 9.400zM12 6.800l4 2.600-4 2.600-4-2.600zM4 12.800 8 10.200l4 2.600-4 2.600z"/></svg>
<svg class="i" style="left:1538px;top:1021px" width="15" height="17" viewBox="0 0 15 17"><rect x="3" y="4" width="11" height="9" fill="#1e3c78" stroke="#eee" stroke-width="1.500"/><rect x="0" y="0" width="4" height="9" fill="#eee"/><path fill="#eee" d="M7 13h3v2h2v2H5v-2h2z"/></svg>
<svg class="i" style="left:1563px;top:1021px" width="14" height="16" viewBox="0 0 14 16"><path fill="#eee" d="M0 5h3l5-4v14l-5-4H0z"/><path fill="none" stroke="#9db0d0" d="M10 5c1 2 1 4 0 6"/></svg>
<div class="t c" style="left:1625px;top:1023px;font-size:12px;color:#fff">10:48 a.m.</div>
<div class="t c" style="left:1625px;top:1039px;font-size:12px;color:#fff">10/07/2019</div>
<div class="b" style="left:1666px;top:1013px;width:13px;height:36px;border:1px solid #7c90b8;background:#335390"></div>
</body></html>
